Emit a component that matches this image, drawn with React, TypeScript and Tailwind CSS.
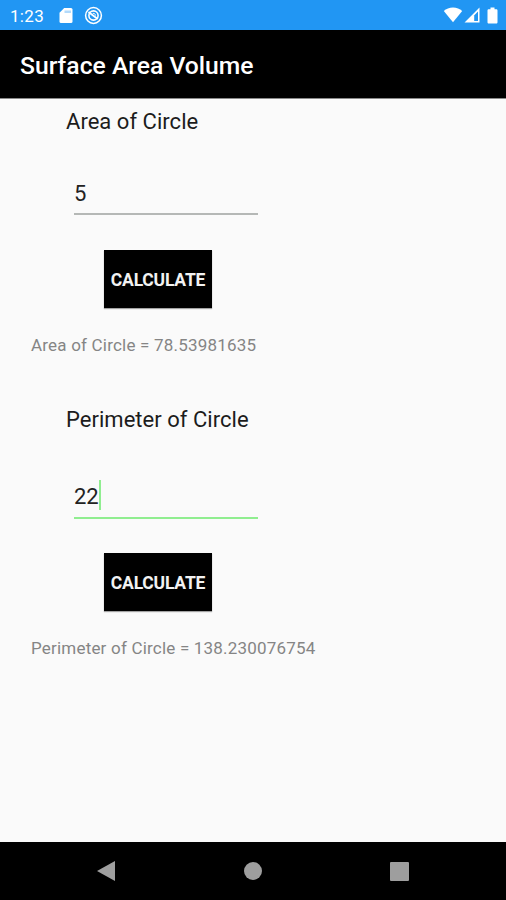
import React from 'react';

interface CalculatorProps {
  title: string;
  value: string;
  result: string;
  focused?: boolean;
}

const StatusBar: React.FC = () => (
  <div className="flex h-[30px] shrink-0 items-center bg-[#2196f3] pl-[10px] pr-[7px] text-white">
    <span className="w-[49px] pt-px text-[17px] leading-5 tracking-[0.3px]">1:23</span>
    <svg className="mt-px h-[17px] w-[14px]" viewBox="0 0 14 17" fill="currentColor">
      <path d="M5.2 1H12a1.5 1.5 0 0 1 1.500 1.500v12A1.500 1.500 0 0 1 12 16H2a1.500 1.500 0 0 1-1.500-1.500V5.700z" />
      <path d="M5.500 3.500H12V6H5.500z" fill="#2196f3" fillOpacity="0.35" />
    </svg>
    <svg className="ml-[11px] mt-px h-[19px] w-[19px]" viewBox="0 0 19 19" fill="none" stroke="currentColor">
      <circle cx="9.5" cy="9.5" r="7.9" strokeWidth="1.5" />
      <circle cx="9.5" cy="9.5" r="4.6" strokeWidth="1.6" />
      <path d="M4.500 6l9.200 7" strokeWidth="1.8" />
      <path d="M8.800 7.400c1.700-.2 2.600.7 2.700 2.100" strokeWidth="1" />
    </svg>
    <svg className="ml-auto h-[16px] w-[20px]" viewBox="0 0 20 16" fill="currentColor">
      <path d="M10 15.300.8 4C3.200 1.800 6.400.6 10 .6S16.800 1.800 19.200 4z" />
    </svg>
    <svg className="ml-px h-[16px] w-[16px]" viewBox="0 0 16 16" fill="currentColor">
      <path fillRule="evenodd" d="M15.500.4v15H.5zM14 4.400 8.600 9.900v4h5.400z" />
      <path d="M8 8.500h2.200v6H8z" />
    </svg>
    <svg className="ml-[7px] mr-px h-[17px] w-[11px]" viewBox="0 0 11 17" fill="currentColor">
      <path d="M3.500.5h4v1.700h1.700c.8 0 1.300.5 1.300 1.300v11.700c0 .8-.5 1.300-1.300 1.300H1.800c-.8 0-1.300-.5-1.300-1.300V3.500c0-.8.5-1.300 1.300-1.300h1.700z" />
    </svg>
  </div>
);

const Calculator: React.FC<CalculatorProps> = ({ title, value, result, focused }) => (
  <section className="flex flex-col items-start">
    <h2 className="ml-[66px] text-[22px] leading-[30px] tracking-[0.03px] text-[#1c1c1c]">{title}</h2>
    <div
      className={`ml-[74px] flex w-[184px] items-start border-b-2 ${
        focused ? 'mt-[45px] h-[39px] border-[#90ee90]' : 'mt-[40px] h-[38px] border-[#b5b8b6]'
      }`}
    >
      <span className="text-[22px] leading-[34px] text-[#222222]">{value}</span>
      {focused && <span className="h-[30px] w-[2px] bg-[#90ee90]" />}
    </div>
    <button
      className={`ml-[104px] h-[58px] w-[108px] bg-black pt-[2px] text-[17.5px] font-bold tracking-[-0.2px] text-[#f2f2f2] shadow-[0_1px_1px_rgba(0,0,0,0.35)] ${
        focused ? 'mt-[34px]' : 'mt-[35px]'
      }`}
    >
      CALCULATE
    </button>
    <p className="ml-[31px] mt-[25px] text-[17px] leading-6 tracking-[0.2px] text-[#858585]">{result}</p>
  </section>
);

const NavigationBar: React.FC = () => (
  <nav className="flex h-[58px] shrink-0 items-center justify-between bg-black pl-[96px] pr-[97px] text-[#9e9e9e]">
    <svg className="h-[22px] w-[20px]" viewBox="0 0 20 22" fill="currentColor">
      <path d="M19 1v20L1 11z" />
    </svg>
    <span className="h-[18px] w-[18px] rounded-full bg-[#9e9e9e]" />
    <span className="h-[19px] w-[19px] rounded-[1px] bg-[#9e9e9e]" />
  </nav>
);

export default function App() {
  return (
    <div className="flex h-[900px] w-[506px] flex-col overflow-hidden bg-[#fafafa] font-['Roboto',sans-serif]">
      <StatusBar />
      <header className="flex h-[68px] shrink-0 items-center bg-black pl-5 pt-1 shadow-[0_1px_0_#8a8a8a]">
        <h1 className="text-[24.7px] font-medium text-white">Surface Area Volume</h1>
      </header>
      <main className="flex flex-1 flex-col gap-12 pt-[9px]">
        <Calculator title="Area of Circle" value="5" result="Area of Circle = 78.53981635" />
        <Calculator title="Perimeter of Circle" value="22" result="Perimeter of Circle = 138.230076754" focused />
      </main>
      <NavigationBar />
    </div>
  );
}
